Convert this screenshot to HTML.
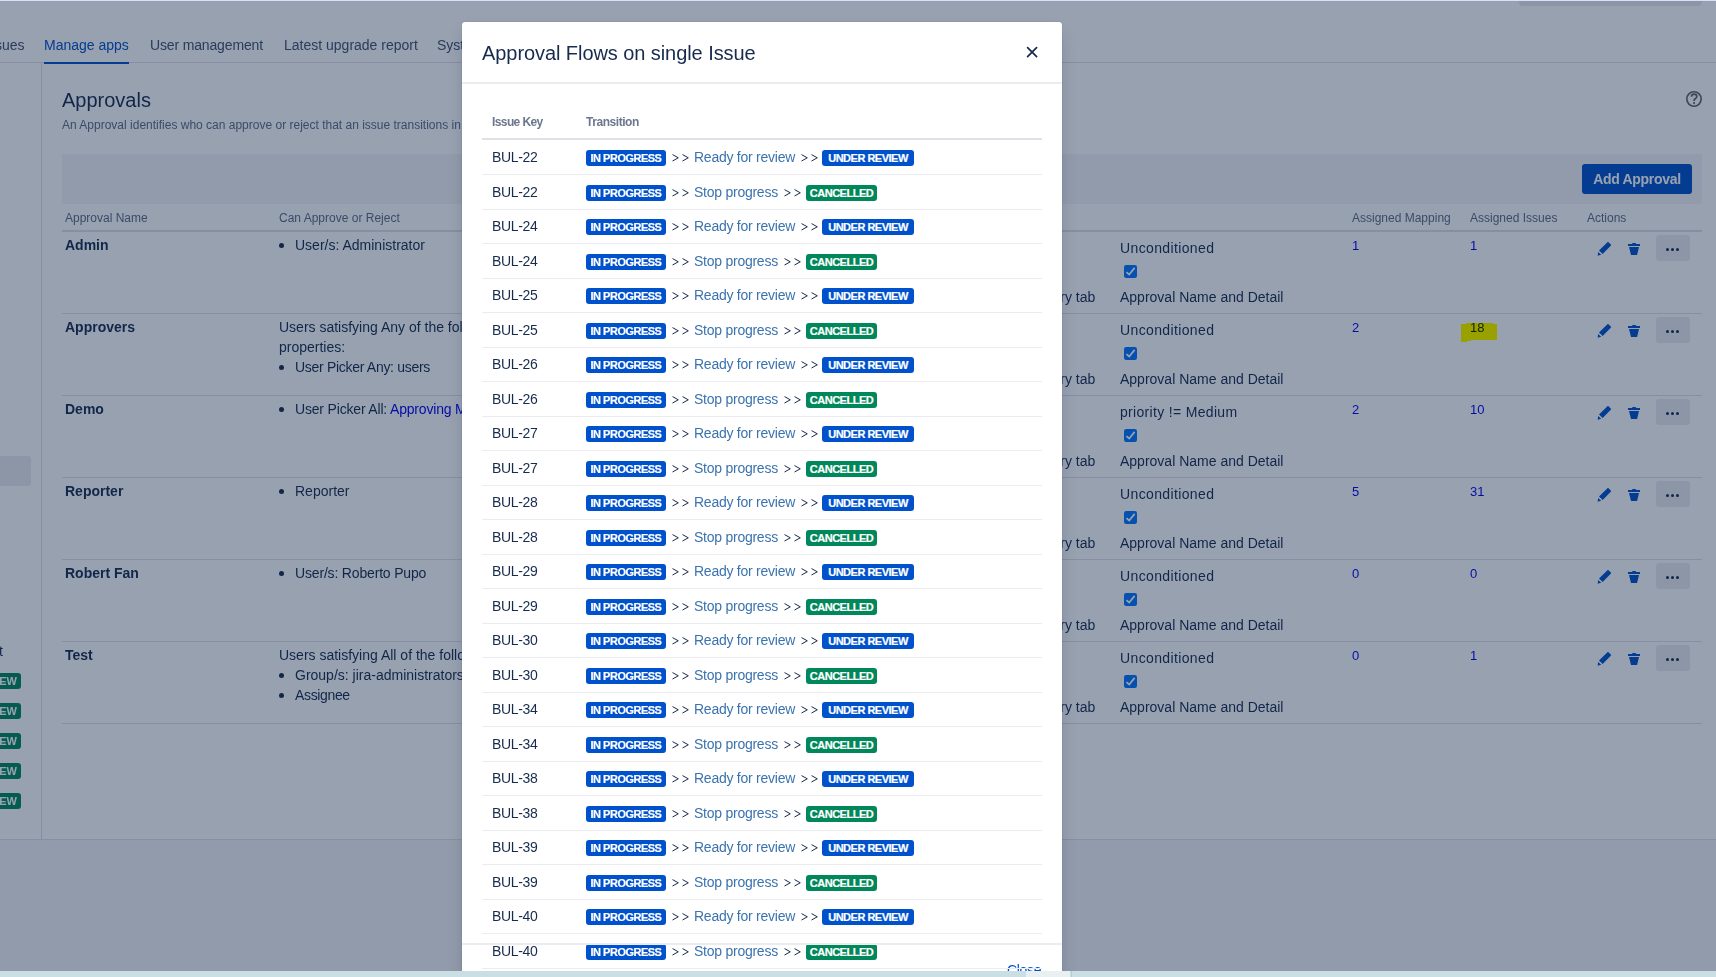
<!DOCTYPE html>
<html><head><meta charset="utf-8">
<style>
*{box-sizing:border-box;margin:0;padding:0}
html,body{width:1716px;height:977px;overflow:hidden;background:#fff;font-family:"Liberation Sans",sans-serif;color:#172b4d}
.a{position:absolute;white-space:nowrap}
#page{position:absolute;left:0;top:0;width:1716px;height:977px;background:#fff}
.tab{font-size:14px;color:#42526e;top:37px;line-height:16px}
.hdr{font-size:12px;color:#5e6c84;line-height:14px}
.t14{font-size:14px;line-height:20px}
.b{font-weight:bold}
.rowb{position:absolute;left:62px;width:1640px;height:1px;background:#dfe1e6}
.chk{position:absolute;width:14px;height:14px;border-radius:2px;background:#0052cc}
.chk:after{content:"";position:absolute;left:4px;top:1.5px;width:4px;height:7.5px;border:solid #fff;border-width:0 2px 2px 0;transform:rotate(45deg)}
.num{font-size:13px;color:#0000ee;line-height:14px}
.more{position:absolute;width:34px;height:26px;border-radius:3px;background:#ebecf0}
.more i{position:absolute;top:13px;width:3px;height:3px;border-radius:50%;background:#172b4d}
.bul:before{content:"";position:absolute;left:-16px;top:8px;width:5px;height:5px;border-radius:50%;background:#172b4d}
#blanket{position:absolute;left:0;top:0;width:1716px;height:977px;background:rgba(9,30,66,0.42)}
#modal{position:absolute;left:462px;top:22px;width:600px;height:960px;background:#fff;border-radius:3px;overflow:hidden;box-shadow:0 0 1px rgba(9,30,66,.31),0 8px 16px -4px rgba(9,30,66,.25)}
.mrow{position:absolute;left:20px;width:560px;height:34.52px;border-bottom:1px solid #ebecf0}
.key{position:absolute;left:10px;top:6.52px;font-size:14px;line-height:20px;color:#172b4d;letter-spacing:-0.35px}
.loz{position:absolute;top:9.52px;height:16px;border-radius:3px;color:#fff;font-weight:bold;font-size:11px;line-height:16px;text-align:center;letter-spacing:-0.5px;-webkit-text-stroke:0.2px #fff}
.lb{background:#0052cc}
.lg{background:#00875a}
.arr{position:absolute;top:13.52px;width:17px;height:8px}.arr svg{display:block}
.lnk{position:absolute;top:6.52px;font-size:14px;line-height:20px;color:#3b73af;letter-spacing:-0.25px}
#strip{position:absolute;left:0;top:971px;width:1716px;height:6px;background:#c9dfe3}
</style></head><body>
<div id="page">
  <div class="a" style="left:0;top:0;width:1716px;height:1px;background:#c8d4f0"></div>
  <div class="a" style="left:1519px;top:0;width:183px;height:6px;background:#ebecf0;border-radius:0 0 4px 4px"></div>
  <!-- nav tabs -->
  <div class="a tab" style="left:-16px">Issues</div>
  <div class="a tab" style="left:44px;color:#0052cc">Manage apps</div>
  <div class="a tab" style="left:150px;letter-spacing:-0.15px">User management</div>
  <div class="a tab" style="left:284px">Latest upgrade report</div>
  <div class="a tab" style="left:437px">System</div>
  <div class="a" style="left:0;top:62px;width:1716px;height:1px;background:#dfe1e6"></div>
  <div class="a" style="left:44px;top:62px;width:85px;height:2px;background:#0052cc"></div>
  <!-- sidebar -->
  <div class="a" style="left:41px;top:63px;width:1px;height:776px;background:#dfe1e6"></div>
  <div class="a" style="left:-4px;top:456px;width:35px;height:30px;border-radius:3px;background:#ebecf0"></div>
  <div class="a" style="left:-1px;top:641px;font-size:14px;line-height:20px">t</div>
  <div class="a" style="left:-30px;top:673px;width:51px;height:16px;border-radius:3px;background:#00875a;color:#fff;font-size:11px;font-weight:bold;line-height:16px;text-align:right;padding-right:4px">VIEW</div>
  <div class="a" style="left:-30px;top:703px;width:51px;height:16px;border-radius:3px;background:#00875a;color:#fff;font-size:11px;font-weight:bold;line-height:16px;text-align:right;padding-right:4px">VIEW</div>
  <div class="a" style="left:-30px;top:733px;width:51px;height:16px;border-radius:3px;background:#00875a;color:#fff;font-size:11px;font-weight:bold;line-height:16px;text-align:right;padding-right:4px">VIEW</div>
  <div class="a" style="left:-30px;top:763px;width:51px;height:16px;border-radius:3px;background:#00875a;color:#fff;font-size:11px;font-weight:bold;line-height:16px;text-align:right;padding-right:4px">VIEW</div>
  <div class="a" style="left:-30px;top:793px;width:51px;height:16px;border-radius:3px;background:#00875a;color:#fff;font-size:11px;font-weight:bold;line-height:16px;text-align:right;padding-right:4px">VIEW</div>
  <!-- footer area -->
  <div class="a" style="left:0;top:839px;width:1716px;height:138px;background:#f4f5f7;border-top:1px solid #dfe1e6"></div>
  <!-- content -->
  <div class="a" style="left:62px;top:88px;font-size:20px;line-height:24px;color:#172b4d">Approvals</div>
  <div class="a" style="left:62px;top:118px;font-size:12px;line-height:14px;color:#5e6c84">An Approval identifies who can approve or reject that an issue transitions in</div>
  <svg class="a" style="left:1686px;top:91px" width="16" height="16" viewBox="0 0 16 16"><circle cx="8" cy="8" r="7.2" fill="none" stroke="#5f6368" stroke-width="1.6"/><path d="M5.5 5.7C5.5 4.1 6.6 3.1 8.1 3.1C9.6 3.1 10.8 4.1 10.8 5.5C10.8 6.7 10 7.2 9.2 7.7C8.4 8.2 8.1 8.6 8.1 9.4V10" fill="none" stroke="#5f6368" stroke-width="1.7"/><circle cx="8.05" cy="12.1" r="1.05" fill="#5f6368"/></svg>
  <div class="a" style="left:62px;top:154px;width:1640px;height:50px;background:#f4f5f7"></div>
  <div class="a" style="left:1582px;top:164px;width:110px;height:30px;border-radius:3px;background:#0052cc;color:#fff;font-weight:bold;font-size:14px;line-height:30px;text-align:center;letter-spacing:-0.3px">Add Approval</div>
  <!-- table header -->
  <div class="a hdr" style="left:65px;top:211px">Approval Name</div>
  <div class="a hdr" style="left:279px;top:211px">Can Approve or Reject</div>
  <div class="a hdr" style="left:1352px;top:211px">Assigned Mapping</div>
  <div class="a hdr" style="left:1470px;top:211px">Assigned Issues</div>
  <div class="a hdr" style="left:1587px;top:211px">Actions</div>
  <div class="a" style="left:62px;top:230px;width:1640px;height:2px;background:#dfe1e6"></div>
  <!-- rows -->
  <div class="rowb" style="top:313px"></div>
  <div class="rowb" style="top:395px"></div>
  <div class="rowb" style="top:477px"></div>
  <div class="rowb" style="top:559px"></div>
  <div class="rowb" style="top:641px"></div>
  <div class="rowb" style="top:723px"></div>
  <div class="a t14 b" style="left:65px;top:235px">Admin</div>
  <div class="a t14 bul" style="left:295px;top:235px;letter-spacing:0px">User/s: Administrator</div>
  <div class="a t14" style="left:1120px;top:238px;letter-spacing:0.37px">Unconditioned</div>
  <svg class="a" style="left:1124px;top:265px" width="13" height="13" viewBox="0 0 13 13"><rect width="13" height="13" rx="2.2" fill="#0075ff"/><path d="M2.4 7.1L5.2 9.5L10.6 2.9" stroke="#fff" stroke-width="1.7" fill="none"/></svg>
  <div class="a t14" style="left:1120px;top:287px">Approval Name and Detail</div>
  <div class="a t14" style="left:1012px;top:287px">Summary tab</div>
  <div class="a num" style="left:1352px;top:238.8px">1</div>
  <div class="a num" style="left:1470px;top:238.8px">1</div>
  <svg class="a" style="left:1594px;top:238px" width="50" height="22" viewBox="0 0 50 22"><path d="M13.7 4.1Q14 3.8 14.3 4.1L17 6.8Q17.3 7.2 17 7.5L8.7 16.1L5 12.4Z" fill="#0052cc"/><path d="M4.1 13.9L7.2 16.8L3.7 17.7Z" fill="#0052cc"/><rect x="34" y="6" width="12" height="2" fill="#0052cc"/><rect x="38.2" y="5" width="3.8" height="1.5" rx="0.5" fill="#0052cc"/><path d="M35 9H45L43.1 17H37Z" fill="#0052cc"/></svg>
  <div class="more" style="left:1656px;top:235px"><i style="left:10.2px"></i><i style="left:15.2px"></i><i style="left:20.2px"></i></div>
  <div class="a t14 b" style="left:65px;top:317px">Approvers</div>
  <div class="a t14" style="left:279px;top:317px">Users satisfying Any of the following</div>
  <div class="a t14" style="left:279px;top:337px">properties:</div>
  <div class="a t14 bul" style="left:295px;top:357px;letter-spacing:-0.3px">User Picker Any: users</div>
  <div class="a t14" style="left:1120px;top:320px;letter-spacing:0.37px">Unconditioned</div>
  <svg class="a" style="left:1124px;top:347px" width="13" height="13" viewBox="0 0 13 13"><rect width="13" height="13" rx="2.2" fill="#0075ff"/><path d="M2.4 7.1L5.2 9.5L10.6 2.9" stroke="#fff" stroke-width="1.7" fill="none"/></svg>
  <div class="a t14" style="left:1120px;top:369px">Approval Name and Detail</div>
  <div class="a t14" style="left:1012px;top:369px">Summary tab</div>
  <div class="a num" style="left:1352px;top:320.8px">2</div>
  <div class="a num" style="left:1470px;top:320.8px;color:#172b4d">18</div>
  <svg class="a" style="left:1594px;top:320px" width="50" height="22" viewBox="0 0 50 22"><path d="M13.7 4.1Q14 3.8 14.3 4.1L17 6.8Q17.3 7.2 17 7.5L8.7 16.1L5 12.4Z" fill="#0052cc"/><path d="M4.1 13.9L7.2 16.8L3.7 17.7Z" fill="#0052cc"/><rect x="34" y="6" width="12" height="2" fill="#0052cc"/><rect x="38.2" y="5" width="3.8" height="1.5" rx="0.5" fill="#0052cc"/><path d="M35 9H45L43.1 17H37Z" fill="#0052cc"/></svg>
  <div class="more" style="left:1656px;top:317px"><i style="left:10.2px"></i><i style="left:15.2px"></i><i style="left:20.2px"></i></div>
  <div class="a t14 b" style="left:65px;top:399px">Demo</div>
  <div class="a t14 bul" style="left:295px;top:399px;letter-spacing:-0.18px">User Picker All: <span style="color:#0000ee">Approving Managers</span></div>
  <div class="a t14" style="left:1120px;top:402px;letter-spacing:0.32px">priority != Medium</div>
  <svg class="a" style="left:1124px;top:429px" width="13" height="13" viewBox="0 0 13 13"><rect width="13" height="13" rx="2.2" fill="#0075ff"/><path d="M2.4 7.1L5.2 9.5L10.6 2.9" stroke="#fff" stroke-width="1.7" fill="none"/></svg>
  <div class="a t14" style="left:1120px;top:451px">Approval Name and Detail</div>
  <div class="a t14" style="left:1012px;top:451px">Summary tab</div>
  <div class="a num" style="left:1352px;top:402.8px">2</div>
  <div class="a num" style="left:1470px;top:402.8px">10</div>
  <svg class="a" style="left:1594px;top:402px" width="50" height="22" viewBox="0 0 50 22"><path d="M13.7 4.1Q14 3.8 14.3 4.1L17 6.8Q17.3 7.2 17 7.5L8.7 16.1L5 12.4Z" fill="#0052cc"/><path d="M4.1 13.9L7.2 16.8L3.7 17.7Z" fill="#0052cc"/><rect x="34" y="6" width="12" height="2" fill="#0052cc"/><rect x="38.2" y="5" width="3.8" height="1.5" rx="0.5" fill="#0052cc"/><path d="M35 9H45L43.1 17H37Z" fill="#0052cc"/></svg>
  <div class="more" style="left:1656px;top:399px"><i style="left:10.2px"></i><i style="left:15.2px"></i><i style="left:20.2px"></i></div>
  <div class="a t14 b" style="left:65px;top:481px">Reporter</div>
  <div class="a t14 bul" style="left:295px;top:481px;letter-spacing:0px">Reporter</div>
  <div class="a t14" style="left:1120px;top:484px;letter-spacing:0.37px">Unconditioned</div>
  <svg class="a" style="left:1124px;top:511px" width="13" height="13" viewBox="0 0 13 13"><rect width="13" height="13" rx="2.2" fill="#0075ff"/><path d="M2.4 7.1L5.2 9.5L10.6 2.9" stroke="#fff" stroke-width="1.7" fill="none"/></svg>
  <div class="a t14" style="left:1120px;top:533px">Approval Name and Detail</div>
  <div class="a t14" style="left:1012px;top:533px">Summary tab</div>
  <div class="a num" style="left:1352px;top:484.8px">5</div>
  <div class="a num" style="left:1470px;top:484.8px">31</div>
  <svg class="a" style="left:1594px;top:484px" width="50" height="22" viewBox="0 0 50 22"><path d="M13.7 4.1Q14 3.8 14.3 4.1L17 6.8Q17.3 7.2 17 7.5L8.7 16.1L5 12.4Z" fill="#0052cc"/><path d="M4.1 13.9L7.2 16.8L3.7 17.7Z" fill="#0052cc"/><rect x="34" y="6" width="12" height="2" fill="#0052cc"/><rect x="38.2" y="5" width="3.8" height="1.5" rx="0.5" fill="#0052cc"/><path d="M35 9H45L43.1 17H37Z" fill="#0052cc"/></svg>
  <div class="more" style="left:1656px;top:481px"><i style="left:10.2px"></i><i style="left:15.2px"></i><i style="left:20.2px"></i></div>
  <div class="a t14 b" style="left:65px;top:563px">Robert Fan</div>
  <div class="a t14 bul" style="left:295px;top:563px;letter-spacing:-0.17px">User/s: Roberto Pupo</div>
  <div class="a t14" style="left:1120px;top:566px;letter-spacing:0.37px">Unconditioned</div>
  <svg class="a" style="left:1124px;top:593px" width="13" height="13" viewBox="0 0 13 13"><rect width="13" height="13" rx="2.2" fill="#0075ff"/><path d="M2.4 7.1L5.2 9.5L10.6 2.9" stroke="#fff" stroke-width="1.7" fill="none"/></svg>
  <div class="a t14" style="left:1120px;top:615px">Approval Name and Detail</div>
  <div class="a t14" style="left:1012px;top:615px">Summary tab</div>
  <div class="a num" style="left:1352px;top:566.8px">0</div>
  <div class="a num" style="left:1470px;top:566.8px">0</div>
  <svg class="a" style="left:1594px;top:566px" width="50" height="22" viewBox="0 0 50 22"><path d="M13.7 4.1Q14 3.8 14.3 4.1L17 6.8Q17.3 7.2 17 7.5L8.7 16.1L5 12.4Z" fill="#0052cc"/><path d="M4.1 13.9L7.2 16.8L3.7 17.7Z" fill="#0052cc"/><rect x="34" y="6" width="12" height="2" fill="#0052cc"/><rect x="38.2" y="5" width="3.8" height="1.5" rx="0.5" fill="#0052cc"/><path d="M35 9H45L43.1 17H37Z" fill="#0052cc"/></svg>
  <div class="more" style="left:1656px;top:563px"><i style="left:10.2px"></i><i style="left:15.2px"></i><i style="left:20.2px"></i></div>
  <div class="a t14 b" style="left:65px;top:645px">Test</div>
  <div class="a t14" style="left:279px;top:645px">Users satisfying All of the following</div>
  <div class="a t14 bul" style="left:295px;top:665px;letter-spacing:0px">Group/s: jira-administrators</div>
  <div class="a t14 bul" style="left:295px;top:685px;letter-spacing:-0.35px">Assignee</div>
  <div class="a t14" style="left:1120px;top:648px;letter-spacing:0.37px">Unconditioned</div>
  <svg class="a" style="left:1124px;top:675px" width="13" height="13" viewBox="0 0 13 13"><rect width="13" height="13" rx="2.2" fill="#0075ff"/><path d="M2.4 7.1L5.2 9.5L10.6 2.9" stroke="#fff" stroke-width="1.7" fill="none"/></svg>
  <div class="a t14" style="left:1120px;top:697px">Approval Name and Detail</div>
  <div class="a t14" style="left:1012px;top:697px">Summary tab</div>
  <div class="a num" style="left:1352px;top:648.8px">0</div>
  <div class="a num" style="left:1470px;top:648.8px">1</div>
  <svg class="a" style="left:1594px;top:648px" width="50" height="22" viewBox="0 0 50 22"><path d="M13.7 4.1Q14 3.8 14.3 4.1L17 6.8Q17.3 7.2 17 7.5L8.7 16.1L5 12.4Z" fill="#0052cc"/><path d="M4.1 13.9L7.2 16.8L3.7 17.7Z" fill="#0052cc"/><rect x="34" y="6" width="12" height="2" fill="#0052cc"/><rect x="38.2" y="5" width="3.8" height="1.5" rx="0.5" fill="#0052cc"/><path d="M35 9H45L43.1 17H37Z" fill="#0052cc"/></svg>
  <div class="more" style="left:1656px;top:645px"><i style="left:10.2px"></i><i style="left:15.2px"></i><i style="left:20.2px"></i></div>
</div>
<div id="blanket"></div>
<div class="a" style="left:0;top:0;width:1716px;height:1px;background:#d2e2fb"></div>
<svg class="a" style="left:1461px;top:323px;mix-blend-mode:multiply" width="36" height="19" viewBox="0 0 36 19"><path d="M0 1H5V0H32V1H36V17H10V18H6V19H0Z" fill="#ffff00"/></svg>
<div id="modal">
  <div class="a" style="left:20px;top:19px;font-size:20px;line-height:24px;color:#172b4d;letter-spacing:-0.07px">Approval Flows on single Issue</div>
  <svg class="a" style="left:564px;top:24px" width="12" height="12" viewBox="0 0 12 12"><path d="M1.6 1.6L10.6 10.6M10.6 1.6L1.6 10.6" stroke="#172b4d" stroke-width="1.7" stroke-linecap="round"/></svg>
  <div class="a" style="left:0;top:60px;width:600px;height:2px;background:#ebecf0"></div>
  <div class="a hdr b" style="left:30px;top:93px;letter-spacing:-0.6px;color:#6b778c">Issue Key</div>
  <div class="a hdr b" style="left:124px;top:93px;letter-spacing:-0.45px;color:#6b778c">Transition</div>
  <div class="a" style="left:20px;top:116px;width:560px;height:2px;background:#dfe1e6"></div>
  <div class="a" style="left:545px;top:937.5px;font-size:14px;line-height:20px;color:#0052cc;letter-spacing:-0.3px">Close</div>
  <div class="mrow" style="top:118.48px"><div class="key">BUL-22</div><div class="loz lb" style="left:104px;width:80px">IN PROGRESS</div><div class="arr" style="left:189.5px"><svg width="17" height="8" viewBox="0 0 17 8"><path d="M0.5 0.6L6.3 3.8L0.5 7M10.5 0.6L16.3 3.8L10.5 7" fill="none" stroke="#172b4d" stroke-width="1"/></svg></div><div class="lnk" style="left:212px">Ready for review</div><div class="arr" style="left:318.5px"><svg width="17" height="8" viewBox="0 0 17 8"><path d="M0.5 0.6L6.3 3.8L0.5 7M10.5 0.6L16.3 3.8L10.5 7" fill="none" stroke="#172b4d" stroke-width="1"/></svg></div><div class="loz lb" style="left:340px;width:92px">UNDER REVIEW</div></div>
  <div class="mrow" style="top:153.00px"><div class="key">BUL-22</div><div class="loz lb" style="left:104px;width:80px">IN PROGRESS</div><div class="arr" style="left:189.5px"><svg width="17" height="8" viewBox="0 0 17 8"><path d="M0.5 0.6L6.3 3.8L0.5 7M10.5 0.6L16.3 3.8L10.5 7" fill="none" stroke="#172b4d" stroke-width="1"/></svg></div><div class="lnk" style="left:212px">Stop progress</div><div class="arr" style="left:301.5px"><svg width="17" height="8" viewBox="0 0 17 8"><path d="M0.5 0.6L6.3 3.8L0.5 7M10.5 0.6L16.3 3.8L10.5 7" fill="none" stroke="#172b4d" stroke-width="1"/></svg></div><div class="loz lg" style="left:324px;width:71px">CANCELLED</div></div>
  <div class="mrow" style="top:187.52px"><div class="key">BUL-24</div><div class="loz lb" style="left:104px;width:80px">IN PROGRESS</div><div class="arr" style="left:189.5px"><svg width="17" height="8" viewBox="0 0 17 8"><path d="M0.5 0.6L6.3 3.8L0.5 7M10.5 0.6L16.3 3.8L10.5 7" fill="none" stroke="#172b4d" stroke-width="1"/></svg></div><div class="lnk" style="left:212px">Ready for review</div><div class="arr" style="left:318.5px"><svg width="17" height="8" viewBox="0 0 17 8"><path d="M0.5 0.6L6.3 3.8L0.5 7M10.5 0.6L16.3 3.8L10.5 7" fill="none" stroke="#172b4d" stroke-width="1"/></svg></div><div class="loz lb" style="left:340px;width:92px">UNDER REVIEW</div></div>
  <div class="mrow" style="top:222.04px"><div class="key">BUL-24</div><div class="loz lb" style="left:104px;width:80px">IN PROGRESS</div><div class="arr" style="left:189.5px"><svg width="17" height="8" viewBox="0 0 17 8"><path d="M0.5 0.6L6.3 3.8L0.5 7M10.5 0.6L16.3 3.8L10.5 7" fill="none" stroke="#172b4d" stroke-width="1"/></svg></div><div class="lnk" style="left:212px">Stop progress</div><div class="arr" style="left:301.5px"><svg width="17" height="8" viewBox="0 0 17 8"><path d="M0.5 0.6L6.3 3.8L0.5 7M10.5 0.6L16.3 3.8L10.5 7" fill="none" stroke="#172b4d" stroke-width="1"/></svg></div><div class="loz lg" style="left:324px;width:71px">CANCELLED</div></div>
  <div class="mrow" style="top:256.56px"><div class="key">BUL-25</div><div class="loz lb" style="left:104px;width:80px">IN PROGRESS</div><div class="arr" style="left:189.5px"><svg width="17" height="8" viewBox="0 0 17 8"><path d="M0.5 0.6L6.3 3.8L0.5 7M10.5 0.6L16.3 3.8L10.5 7" fill="none" stroke="#172b4d" stroke-width="1"/></svg></div><div class="lnk" style="left:212px">Ready for review</div><div class="arr" style="left:318.5px"><svg width="17" height="8" viewBox="0 0 17 8"><path d="M0.5 0.6L6.3 3.8L0.5 7M10.5 0.6L16.3 3.8L10.5 7" fill="none" stroke="#172b4d" stroke-width="1"/></svg></div><div class="loz lb" style="left:340px;width:92px">UNDER REVIEW</div></div>
  <div class="mrow" style="top:291.08px"><div class="key">BUL-25</div><div class="loz lb" style="left:104px;width:80px">IN PROGRESS</div><div class="arr" style="left:189.5px"><svg width="17" height="8" viewBox="0 0 17 8"><path d="M0.5 0.6L6.3 3.8L0.5 7M10.5 0.6L16.3 3.8L10.5 7" fill="none" stroke="#172b4d" stroke-width="1"/></svg></div><div class="lnk" style="left:212px">Stop progress</div><div class="arr" style="left:301.5px"><svg width="17" height="8" viewBox="0 0 17 8"><path d="M0.5 0.6L6.3 3.8L0.5 7M10.5 0.6L16.3 3.8L10.5 7" fill="none" stroke="#172b4d" stroke-width="1"/></svg></div><div class="loz lg" style="left:324px;width:71px">CANCELLED</div></div>
  <div class="mrow" style="top:325.60px"><div class="key">BUL-26</div><div class="loz lb" style="left:104px;width:80px">IN PROGRESS</div><div class="arr" style="left:189.5px"><svg width="17" height="8" viewBox="0 0 17 8"><path d="M0.5 0.6L6.3 3.8L0.5 7M10.5 0.6L16.3 3.8L10.5 7" fill="none" stroke="#172b4d" stroke-width="1"/></svg></div><div class="lnk" style="left:212px">Ready for review</div><div class="arr" style="left:318.5px"><svg width="17" height="8" viewBox="0 0 17 8"><path d="M0.5 0.6L6.3 3.8L0.5 7M10.5 0.6L16.3 3.8L10.5 7" fill="none" stroke="#172b4d" stroke-width="1"/></svg></div><div class="loz lb" style="left:340px;width:92px">UNDER REVIEW</div></div>
  <div class="mrow" style="top:360.12px"><div class="key">BUL-26</div><div class="loz lb" style="left:104px;width:80px">IN PROGRESS</div><div class="arr" style="left:189.5px"><svg width="17" height="8" viewBox="0 0 17 8"><path d="M0.5 0.6L6.3 3.8L0.5 7M10.5 0.6L16.3 3.8L10.5 7" fill="none" stroke="#172b4d" stroke-width="1"/></svg></div><div class="lnk" style="left:212px">Stop progress</div><div class="arr" style="left:301.5px"><svg width="17" height="8" viewBox="0 0 17 8"><path d="M0.5 0.6L6.3 3.8L0.5 7M10.5 0.6L16.3 3.8L10.5 7" fill="none" stroke="#172b4d" stroke-width="1"/></svg></div><div class="loz lg" style="left:324px;width:71px">CANCELLED</div></div>
  <div class="mrow" style="top:394.64px"><div class="key">BUL-27</div><div class="loz lb" style="left:104px;width:80px">IN PROGRESS</div><div class="arr" style="left:189.5px"><svg width="17" height="8" viewBox="0 0 17 8"><path d="M0.5 0.6L6.3 3.8L0.5 7M10.5 0.6L16.3 3.8L10.5 7" fill="none" stroke="#172b4d" stroke-width="1"/></svg></div><div class="lnk" style="left:212px">Ready for review</div><div class="arr" style="left:318.5px"><svg width="17" height="8" viewBox="0 0 17 8"><path d="M0.5 0.6L6.3 3.8L0.5 7M10.5 0.6L16.3 3.8L10.5 7" fill="none" stroke="#172b4d" stroke-width="1"/></svg></div><div class="loz lb" style="left:340px;width:92px">UNDER REVIEW</div></div>
  <div class="mrow" style="top:429.16px"><div class="key">BUL-27</div><div class="loz lb" style="left:104px;width:80px">IN PROGRESS</div><div class="arr" style="left:189.5px"><svg width="17" height="8" viewBox="0 0 17 8"><path d="M0.5 0.6L6.3 3.8L0.5 7M10.5 0.6L16.3 3.8L10.5 7" fill="none" stroke="#172b4d" stroke-width="1"/></svg></div><div class="lnk" style="left:212px">Stop progress</div><div class="arr" style="left:301.5px"><svg width="17" height="8" viewBox="0 0 17 8"><path d="M0.5 0.6L6.3 3.8L0.5 7M10.5 0.6L16.3 3.8L10.5 7" fill="none" stroke="#172b4d" stroke-width="1"/></svg></div><div class="loz lg" style="left:324px;width:71px">CANCELLED</div></div>
  <div class="mrow" style="top:463.68px"><div class="key">BUL-28</div><div class="loz lb" style="left:104px;width:80px">IN PROGRESS</div><div class="arr" style="left:189.5px"><svg width="17" height="8" viewBox="0 0 17 8"><path d="M0.5 0.6L6.3 3.8L0.5 7M10.5 0.6L16.3 3.8L10.5 7" fill="none" stroke="#172b4d" stroke-width="1"/></svg></div><div class="lnk" style="left:212px">Ready for review</div><div class="arr" style="left:318.5px"><svg width="17" height="8" viewBox="0 0 17 8"><path d="M0.5 0.6L6.3 3.8L0.5 7M10.5 0.6L16.3 3.8L10.5 7" fill="none" stroke="#172b4d" stroke-width="1"/></svg></div><div class="loz lb" style="left:340px;width:92px">UNDER REVIEW</div></div>
  <div class="mrow" style="top:498.20px"><div class="key">BUL-28</div><div class="loz lb" style="left:104px;width:80px">IN PROGRESS</div><div class="arr" style="left:189.5px"><svg width="17" height="8" viewBox="0 0 17 8"><path d="M0.5 0.6L6.3 3.8L0.5 7M10.5 0.6L16.3 3.8L10.5 7" fill="none" stroke="#172b4d" stroke-width="1"/></svg></div><div class="lnk" style="left:212px">Stop progress</div><div class="arr" style="left:301.5px"><svg width="17" height="8" viewBox="0 0 17 8"><path d="M0.5 0.6L6.3 3.8L0.5 7M10.5 0.6L16.3 3.8L10.5 7" fill="none" stroke="#172b4d" stroke-width="1"/></svg></div><div class="loz lg" style="left:324px;width:71px">CANCELLED</div></div>
  <div class="mrow" style="top:532.72px"><div class="key">BUL-29</div><div class="loz lb" style="left:104px;width:80px">IN PROGRESS</div><div class="arr" style="left:189.5px"><svg width="17" height="8" viewBox="0 0 17 8"><path d="M0.5 0.6L6.3 3.8L0.5 7M10.5 0.6L16.3 3.8L10.5 7" fill="none" stroke="#172b4d" stroke-width="1"/></svg></div><div class="lnk" style="left:212px">Ready for review</div><div class="arr" style="left:318.5px"><svg width="17" height="8" viewBox="0 0 17 8"><path d="M0.5 0.6L6.3 3.8L0.5 7M10.5 0.6L16.3 3.8L10.5 7" fill="none" stroke="#172b4d" stroke-width="1"/></svg></div><div class="loz lb" style="left:340px;width:92px">UNDER REVIEW</div></div>
  <div class="mrow" style="top:567.24px"><div class="key">BUL-29</div><div class="loz lb" style="left:104px;width:80px">IN PROGRESS</div><div class="arr" style="left:189.5px"><svg width="17" height="8" viewBox="0 0 17 8"><path d="M0.5 0.6L6.3 3.8L0.5 7M10.5 0.6L16.3 3.8L10.5 7" fill="none" stroke="#172b4d" stroke-width="1"/></svg></div><div class="lnk" style="left:212px">Stop progress</div><div class="arr" style="left:301.5px"><svg width="17" height="8" viewBox="0 0 17 8"><path d="M0.5 0.6L6.3 3.8L0.5 7M10.5 0.6L16.3 3.8L10.5 7" fill="none" stroke="#172b4d" stroke-width="1"/></svg></div><div class="loz lg" style="left:324px;width:71px">CANCELLED</div></div>
  <div class="mrow" style="top:601.76px"><div class="key">BUL-30</div><div class="loz lb" style="left:104px;width:80px">IN PROGRESS</div><div class="arr" style="left:189.5px"><svg width="17" height="8" viewBox="0 0 17 8"><path d="M0.5 0.6L6.3 3.8L0.5 7M10.5 0.6L16.3 3.8L10.5 7" fill="none" stroke="#172b4d" stroke-width="1"/></svg></div><div class="lnk" style="left:212px">Ready for review</div><div class="arr" style="left:318.5px"><svg width="17" height="8" viewBox="0 0 17 8"><path d="M0.5 0.6L6.3 3.8L0.5 7M10.5 0.6L16.3 3.8L10.5 7" fill="none" stroke="#172b4d" stroke-width="1"/></svg></div><div class="loz lb" style="left:340px;width:92px">UNDER REVIEW</div></div>
  <div class="mrow" style="top:636.28px"><div class="key">BUL-30</div><div class="loz lb" style="left:104px;width:80px">IN PROGRESS</div><div class="arr" style="left:189.5px"><svg width="17" height="8" viewBox="0 0 17 8"><path d="M0.5 0.6L6.3 3.8L0.5 7M10.5 0.6L16.3 3.8L10.5 7" fill="none" stroke="#172b4d" stroke-width="1"/></svg></div><div class="lnk" style="left:212px">Stop progress</div><div class="arr" style="left:301.5px"><svg width="17" height="8" viewBox="0 0 17 8"><path d="M0.5 0.6L6.3 3.8L0.5 7M10.5 0.6L16.3 3.8L10.5 7" fill="none" stroke="#172b4d" stroke-width="1"/></svg></div><div class="loz lg" style="left:324px;width:71px">CANCELLED</div></div>
  <div class="mrow" style="top:670.80px"><div class="key">BUL-34</div><div class="loz lb" style="left:104px;width:80px">IN PROGRESS</div><div class="arr" style="left:189.5px"><svg width="17" height="8" viewBox="0 0 17 8"><path d="M0.5 0.6L6.3 3.8L0.5 7M10.5 0.6L16.3 3.8L10.5 7" fill="none" stroke="#172b4d" stroke-width="1"/></svg></div><div class="lnk" style="left:212px">Ready for review</div><div class="arr" style="left:318.5px"><svg width="17" height="8" viewBox="0 0 17 8"><path d="M0.5 0.6L6.3 3.8L0.5 7M10.5 0.6L16.3 3.8L10.5 7" fill="none" stroke="#172b4d" stroke-width="1"/></svg></div><div class="loz lb" style="left:340px;width:92px">UNDER REVIEW</div></div>
  <div class="mrow" style="top:705.32px"><div class="key">BUL-34</div><div class="loz lb" style="left:104px;width:80px">IN PROGRESS</div><div class="arr" style="left:189.5px"><svg width="17" height="8" viewBox="0 0 17 8"><path d="M0.5 0.6L6.3 3.8L0.5 7M10.5 0.6L16.3 3.8L10.5 7" fill="none" stroke="#172b4d" stroke-width="1"/></svg></div><div class="lnk" style="left:212px">Stop progress</div><div class="arr" style="left:301.5px"><svg width="17" height="8" viewBox="0 0 17 8"><path d="M0.5 0.6L6.3 3.8L0.5 7M10.5 0.6L16.3 3.8L10.5 7" fill="none" stroke="#172b4d" stroke-width="1"/></svg></div><div class="loz lg" style="left:324px;width:71px">CANCELLED</div></div>
  <div class="mrow" style="top:739.84px"><div class="key">BUL-38</div><div class="loz lb" style="left:104px;width:80px">IN PROGRESS</div><div class="arr" style="left:189.5px"><svg width="17" height="8" viewBox="0 0 17 8"><path d="M0.5 0.6L6.3 3.8L0.5 7M10.5 0.6L16.3 3.8L10.5 7" fill="none" stroke="#172b4d" stroke-width="1"/></svg></div><div class="lnk" style="left:212px">Ready for review</div><div class="arr" style="left:318.5px"><svg width="17" height="8" viewBox="0 0 17 8"><path d="M0.5 0.6L6.3 3.8L0.5 7M10.5 0.6L16.3 3.8L10.5 7" fill="none" stroke="#172b4d" stroke-width="1"/></svg></div><div class="loz lb" style="left:340px;width:92px">UNDER REVIEW</div></div>
  <div class="mrow" style="top:774.36px"><div class="key">BUL-38</div><div class="loz lb" style="left:104px;width:80px">IN PROGRESS</div><div class="arr" style="left:189.5px"><svg width="17" height="8" viewBox="0 0 17 8"><path d="M0.5 0.6L6.3 3.8L0.5 7M10.5 0.6L16.3 3.8L10.5 7" fill="none" stroke="#172b4d" stroke-width="1"/></svg></div><div class="lnk" style="left:212px">Stop progress</div><div class="arr" style="left:301.5px"><svg width="17" height="8" viewBox="0 0 17 8"><path d="M0.5 0.6L6.3 3.8L0.5 7M10.5 0.6L16.3 3.8L10.5 7" fill="none" stroke="#172b4d" stroke-width="1"/></svg></div><div class="loz lg" style="left:324px;width:71px">CANCELLED</div></div>
  <div class="mrow" style="top:808.88px"><div class="key">BUL-39</div><div class="loz lb" style="left:104px;width:80px">IN PROGRESS</div><div class="arr" style="left:189.5px"><svg width="17" height="8" viewBox="0 0 17 8"><path d="M0.5 0.6L6.3 3.8L0.5 7M10.5 0.6L16.3 3.8L10.5 7" fill="none" stroke="#172b4d" stroke-width="1"/></svg></div><div class="lnk" style="left:212px">Ready for review</div><div class="arr" style="left:318.5px"><svg width="17" height="8" viewBox="0 0 17 8"><path d="M0.5 0.6L6.3 3.8L0.5 7M10.5 0.6L16.3 3.8L10.5 7" fill="none" stroke="#172b4d" stroke-width="1"/></svg></div><div class="loz lb" style="left:340px;width:92px">UNDER REVIEW</div></div>
  <div class="mrow" style="top:843.40px"><div class="key">BUL-39</div><div class="loz lb" style="left:104px;width:80px">IN PROGRESS</div><div class="arr" style="left:189.5px"><svg width="17" height="8" viewBox="0 0 17 8"><path d="M0.5 0.6L6.3 3.8L0.5 7M10.5 0.6L16.3 3.8L10.5 7" fill="none" stroke="#172b4d" stroke-width="1"/></svg></div><div class="lnk" style="left:212px">Stop progress</div><div class="arr" style="left:301.5px"><svg width="17" height="8" viewBox="0 0 17 8"><path d="M0.5 0.6L6.3 3.8L0.5 7M10.5 0.6L16.3 3.8L10.5 7" fill="none" stroke="#172b4d" stroke-width="1"/></svg></div><div class="loz lg" style="left:324px;width:71px">CANCELLED</div></div>
  <div class="mrow" style="top:877.92px"><div class="key">BUL-40</div><div class="loz lb" style="left:104px;width:80px">IN PROGRESS</div><div class="arr" style="left:189.5px"><svg width="17" height="8" viewBox="0 0 17 8"><path d="M0.5 0.6L6.3 3.8L0.5 7M10.5 0.6L16.3 3.8L10.5 7" fill="none" stroke="#172b4d" stroke-width="1"/></svg></div><div class="lnk" style="left:212px">Ready for review</div><div class="arr" style="left:318.5px"><svg width="17" height="8" viewBox="0 0 17 8"><path d="M0.5 0.6L6.3 3.8L0.5 7M10.5 0.6L16.3 3.8L10.5 7" fill="none" stroke="#172b4d" stroke-width="1"/></svg></div><div class="loz lb" style="left:340px;width:92px">UNDER REVIEW</div></div>
  <div class="mrow" style="top:912.44px"><div class="key">BUL-40</div><div class="loz lb" style="left:104px;width:80px">IN PROGRESS</div><div class="arr" style="left:189.5px"><svg width="17" height="8" viewBox="0 0 17 8"><path d="M0.5 0.6L6.3 3.8L0.5 7M10.5 0.6L16.3 3.8L10.5 7" fill="none" stroke="#172b4d" stroke-width="1"/></svg></div><div class="lnk" style="left:212px">Stop progress</div><div class="arr" style="left:301.5px"><svg width="17" height="8" viewBox="0 0 17 8"><path d="M0.5 0.6L6.3 3.8L0.5 7M10.5 0.6L16.3 3.8L10.5 7" fill="none" stroke="#172b4d" stroke-width="1"/></svg></div><div class="loz lg" style="left:324px;width:71px">CANCELLED</div></div>
  <div class="a" style="left:0;top:921px;width:600px;height:2px;background:#ebecf0"></div>
</div>
<div id="strip"></div>
<div class="a" style="left:1026px;top:971px;width:44px;height:6px;background:#e8f0f2"></div>
<div class="a" style="left:1071px;top:971px;width:1px;height:6px;background:#b8cdd2"></div>
</body></html>
